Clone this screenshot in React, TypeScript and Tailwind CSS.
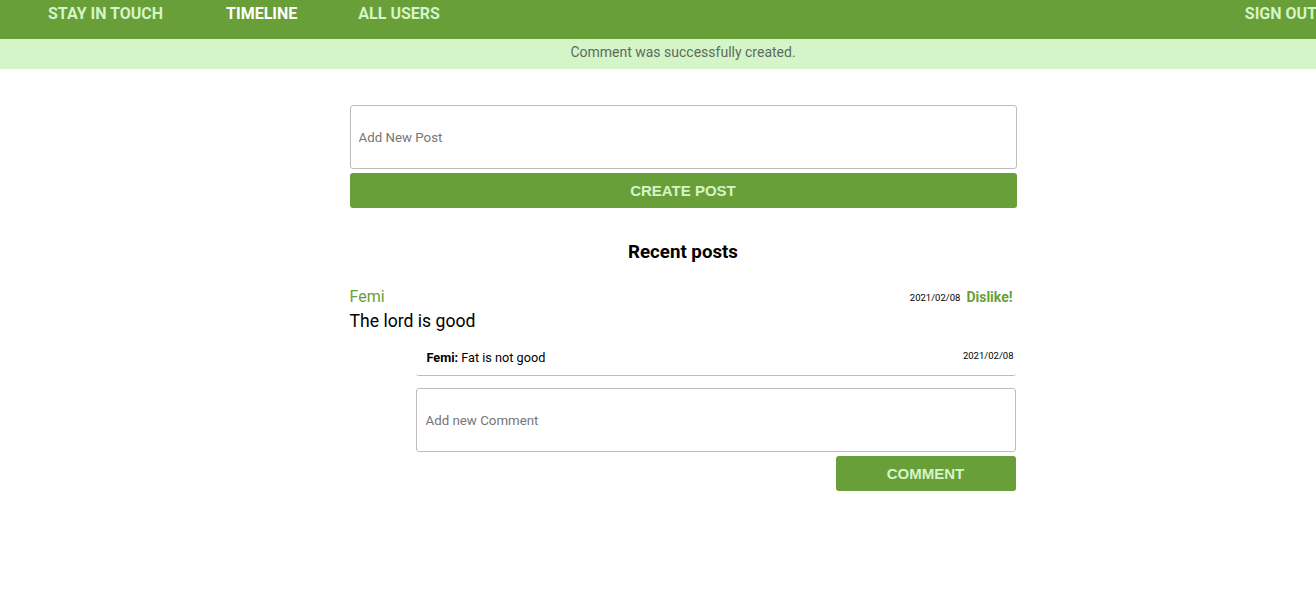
import React from 'react';

const navLinks = [
  { name: 'STAY IN TOUCH', active: false, gap: 'mr-[63px]' },
  { name: 'TIMELINE', active: true, gap: 'mr-[61px]' },
  { name: 'ALL USERS', active: false, gap: '' },
];

const App: React.FC = () => {
  return (
    <div className="w-[1366px] min-h-[607px] bg-white font-['Roboto',sans-serif] overflow-hidden">
      {/* nav */}
      <header className="h-[39px] bg-[#689f38] flex items-start">
        <nav className="flex pl-[48px] pt-[4px]">
          {navLinks.map((link) => (
            <a
              key={link.name}
              href="#"
              className={`${link.gap} text-[16px] font-bold leading-[19px] ${link.active ? 'text-white' : 'text-[#d4f5c7]'}`}
            >
              {link.name}
            </a>
          ))}
        </nav>
        <a href="#" className="ml-auto mr-[49px] pt-[4px] text-[16px] font-bold leading-[19px] text-[#d4f5c7]">
          SIGN OUT
        </a>
      </header>

      {/* notice */}
      <div className="h-[30px] bg-[#d4f5c7] flex items-start justify-center pt-[4px] text-[14px] leading-[18px] text-[#5e6b5e]">
        Comment was successfully created.
      </div>

      <main className="w-[667px] mx-auto pt-[36px]">
        <form className="flex flex-col gap-[4px]">
          <input
            placeholder="Add New Post"
            className="h-[64px] w-full border border-[#bdbdbd] rounded-[3px] px-[8px] pt-[1px] text-[13.3px] font-['Roboto',sans-serif] placeholder:text-[#757575] outline-none"
          />
          <button
            type="button"
            className="h-[35px] w-full rounded-[3px] bg-[#689f38] pt-[2px] text-[#d4f5c7] text-[15px] font-bold font-['Liberation_Sans',sans-serif]"
          >
            CREATE POST
          </button>
        </form>

        <h2 className="mt-[33px] text-center text-[18.7px] font-bold text-black leading-[22px]">Recent posts</h2>

        <div className="mt-[23px]">
          <div className="flex items-end justify-between">
            <span className="text-[16px] text-[#689f38] leading-[18px] -translate-y-[1px]">Femi</span>
            <div className="flex items-baseline gap-[6px] pr-[4px]">
              <span className="text-[9.5px] text-black">2021/02/08</span>
              <button type="button" className="text-[14px] font-bold text-[#689f38] translate-y-[1px]">Dislike!</button>
            </div>
          </div>
          <p className="mt-[3px] text-[17.6px] text-black leading-[22px]">The lord is good</p>

          <div className="ml-[66px] mr-[1px] mt-[12px]">
            <div className="flex justify-between items-start h-[32px] border-b border-[#bdbdbd] rounded-b-[3px] pl-[11px] pr-[2px] pt-[4px]">
              <p className="text-[12.7px] text-black">
                <span className="font-bold">Femi:</span> Fat is not good
              </p>
              <span className="text-[9.5px] text-black translate-y-[1px]">2021/02/08</span>
            </div>
            <form className="mt-[12px] flex flex-col items-end gap-[4px]">
              <input
                placeholder="Add new Comment"
                className="h-[64px] w-full border border-[#bdbdbd] rounded-[3px] px-[9px] pt-[1px] text-[13.3px] font-['Roboto',sans-serif] placeholder:text-[#757575] outline-none"
              />
              <button
                type="button"
                className="h-[35px] w-[180px] rounded-[3px] bg-[#689f38] pt-[2px] text-[#d4f5c7] text-[15px] font-bold font-['Liberation_Sans',sans-serif]"
              >
                COMMENT
              </button>
            </form>
          </div>
        </div>
      </main>
    </div>
  );
};

export default App;
